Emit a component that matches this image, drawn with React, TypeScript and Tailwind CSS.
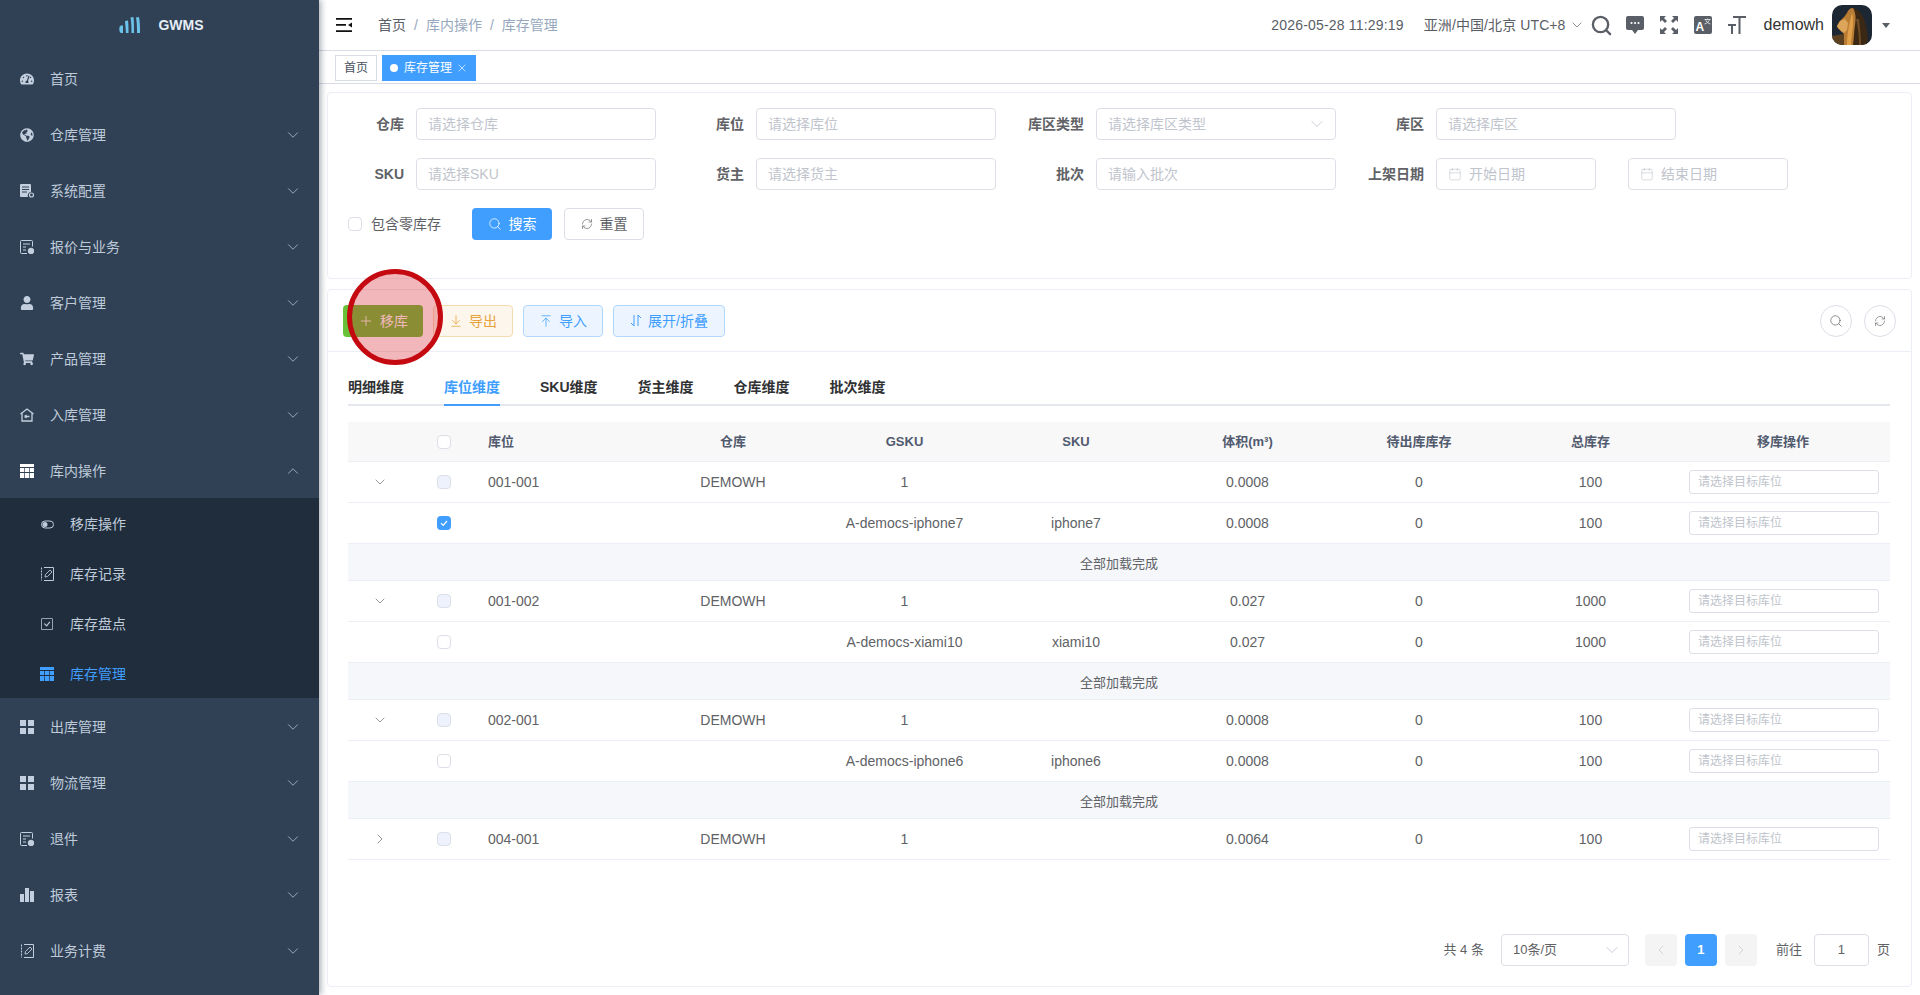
import React from "react";
import { ChevronDown, ChevronUp, ChevronRight, ChevronLeft, Plus, ArrowDownToLine, ArrowUpToLine, Search, RefreshCw, Calendar, X } from "lucide-react";
import { BsCheckSquare } from "react-icons/bs";
import { FaTachometerAlt, FaGlobeAmericas, FaUser, FaShoppingCart } from "react-icons/fa";

function DocIcon() {
  return (
    <svg width="14" height="14" viewBox="0 0 14 14" fill="none" stroke="currentColor" strokeWidth="1">
      <path d="M12.500 6.500V1.500a1 1 0 0 0-1-1h-10a1 1 0 0 0-1 1v11a1 1 0 0 0 1 1H7" />
      <path d="M3 4h7M3 7h3M3 10h3" />
      <circle cx="11" cy="11" r="2.800" fill="currentColor" />
    </svg>
  );
}

function ServerIcon() {
  return (
    <svg width="14" height="14" viewBox="0 0 14 14" fill="currentColor">
      <path d="M0 1a1 1 0 0 1 1-1h9a1 1 0 0 1 1 1v7a3.500 3.500 0 0 0-3 5H1a1 1 0 0 1-1-1z" />
      <path d="M2 3h7M2 5.500h7M2 8h5" stroke="#304156" strokeWidth="1" />
      <circle cx="11.500" cy="11" r="2" fill="none" stroke="currentColor" strokeWidth="1.200" />
    </svg>
  );
}

function HomeInIcon() {
  return (
    <svg width="14" height="14" viewBox="0 0 14 14" fill="none" stroke="currentColor" strokeWidth="1.300">
      <path d="M0.500 6L7 1l6.500 5M2 5v8h10V5" />
      <path d="M4.500 8.500h5M4.500 8.500l2-1.600M4.500 8.500l2 1.600" />
    </svg>
  );
}

function Table3Icon({ color }: { color?: string }) {
  return (
    <svg width="14" height="14" viewBox="0 0 14 14" fill={color || "currentColor"}>
      <path d="M0 0h14v3H0z" />
      <path d="M0 4h4.200v4H0zM4.900 4h4.200v4H4.900zM9.800 4H14v4H9.800zM0 9h4.200v5H0zM4.900 9h4.200v5H4.900zM9.800 9H14v5H9.800z" />
    </svg>
  );
}

function BlocksIcon() {
  return (
    <svg width="14" height="14" viewBox="0 0 14 14" fill="currentColor">
      <path d="M0 0h6v6H0zM8 0h6v6H8zM0 8h6v6H0zM8 8h6v6H8z" />
    </svg>
  );
}

function BarsIcon() {
  return (
    <svg width="14" height="14" viewBox="0 0 14 14" fill="currentColor">
      <path d="M0 6h4v8H0zM5 0h4v14H5zM10 3h4v11h-4z" />
    </svg>
  );
}

function EditIcon() {
  return (
    <svg width="13" height="14" viewBox="0 0 13 14" fill="none" stroke="currentColor" strokeWidth="1">
      <path d="M0.500 0.500v13" strokeDasharray="2 1" />
      <path d="M3 0.500H12.500V13.500H3" />
      <path d="M4 10l.5-2.500L9 3l2 2-4.500 4.500z" strokeWidth="0.900" />
    </svg>
  );
}

function ToggleIcon() {
  return (
    <svg width="13" height="9" viewBox="0 0 13 9" fill="none" stroke="currentColor" strokeWidth="1">
      <rect x="0.500" y="1" width="12" height="7" rx="3.500" />
      <circle cx="4" cy="4.500" r="2.500" fill="currentColor" stroke="none" />
    </svg>
  );
}

const menus: { label: string; icon: React.ReactNode }[] = [
  { label: "仓库管理", icon: <FaGlobeAmericas size={14} /> },
  { label: "系统配置", icon: <ServerIcon /> },
  { label: "报价与业务", icon: <DocIcon /> },
  { label: "客户管理", icon: <FaUser size={14} /> },
  { label: "产品管理", icon: <FaShoppingCart size={14} /> },
  { label: "入库管理", icon: <HomeInIcon /> },
];

const menusAfter: { label: string; icon: React.ReactNode }[] = [
  { label: "出库管理", icon: <BlocksIcon /> },
  { label: "物流管理", icon: <BlocksIcon /> },
  { label: "退件", icon: <DocIcon /> },
  { label: "报表", icon: <BarsIcon /> },
  { label: "业务计费", icon: <EditIcon /> },
];

function MenuItem(props: { label: string; icon: React.ReactNode; open?: boolean; arrow?: boolean }) {
  return (
    <div className="flex h-14 items-center pl-5 pr-[17px] pt-[2px] text-sm text-[#bfcbd9]">
      <span className="flex w-[14px] justify-center text-[#c3cfde]">{props.icon}</span>
      <span className="ml-4 flex-1">{props.label}</span>
      {props.arrow !== false && (props.open ? <ChevronUp size={18} strokeWidth={1} /> : <ChevronDown size={18} strokeWidth={1} />)}
    </div>
  );
}

function SubItem(props: { label: string; icon: React.ReactNode; active?: boolean }) {
  return (
    <div className={`flex h-[50px] items-center pl-10 pt-[2px] text-sm ${props.active ? "text-[#409eff]" : "text-[#bfcbd9]"}`}>
      <span className="flex w-[14px] justify-center">{props.icon}</span>
      <span className="ml-[16px]">{props.label}</span>
    </div>
  );
}

function Sidebar() {
  return (
    <aside className="z-10 flex w-[319px] shrink-0 flex-col bg-[#304156] shadow-[2px_0_6px_rgba(0,21,41,0.35)]">
      <div className="flex h-[50px] items-center justify-center pl-1">
        <svg width="22" height="16" viewBox="0 0 22 16" fill="#6cc3ea">
          <path d="M.5 10c1-1.500 3-2.500 3.500-1v7H2C.5 16 0 12 .5 10z" />
          <path d="M6 4l3-.5c.5 4 .5 8 .5 12.500H7C6.500 12 6.500 8 6 4z" />
          <path d="M11.500 .5l3-.5c.5 5 .5 11 .5 16h-2.500c0-5 0-10-1-15.500z" />
          <path d="M17 .5l3-.5c1 5 1 11 1 16h-3c0-5 0-10-1-15.500z" />
        </svg>
        <span className="ml-[17px] text-sm font-semibold text-[#e6edf5]">GWMS</span>
      </div>
      <MenuItem label="首页" icon={<FaTachometerAlt size={14} />} arrow={false} />
      {menus.map((m) => (
        <MenuItem key={m.label} {...m} />
      ))}
      <MenuItem label="库内操作" icon={<Table3Icon color="#fff" />} open />
      <div className="bg-[#1f2d3d]">
        <SubItem label="移库操作" icon={<ToggleIcon />} />
        <SubItem label="库存记录" icon={<EditIcon />} />
        <SubItem label="库存盘点" icon={<BsCheckSquare size={12} />} />
        <SubItem label="库存管理" icon={<Table3Icon color="#409eff" />} active />
      </div>
      {menusAfter.map((m) => (
        <MenuItem key={m.label} {...m} />
      ))}
    </aside>
  );
}

function Avatar() {
  return (
    <svg width="40" height="40" viewBox="0 0 40 40" className="ml-[8px] rounded-[10px]">
      <rect width="40" height="40" fill="#1c2733" />
      <path d="M0 31l12-2v11H0z" fill="#5b4122" />
      <path d="M21 3c6 1 10 7 12 14s3 15 3 23H12V29l-3-3-3-3-1-2 3-5 4-4 3-5z" fill="#3a2815" />
      <path d="M21 3c-3 0-5 2-6 5l-3 4-4 4-3 5 1 2 3 3 3 3v11h9c1-7 1-14 2-20s1-12-2-17z" fill="#b97c34" />
      <path d="M5 21l3-5 5-2 3 4-1 7-3 3-3-2-3-3z" fill="#dca55a" />
      <path d="M20 8c2 6 1 14 0 21s-1 8-1 11h-4c0-8 1-13 2-19s2-9 3-13z" fill="#e0a04a" />
      <path d="M27 14c1 8 2 17 2 26h-2c0-9-1-18-3-26z" fill="#6e4a22" />
    </svg>
  );
}

function Header() {
  return (
    <header className="flex h-[51px] items-center border-b border-[#d8dce5] pl-[17px] pr-[30px] text-sm text-[#5a5e66]">
      <svg width="16" height="14" viewBox="0 0 16 14" fill="#111">
        <path d="M0 0h16v1.800H0zM0 12.200h16v1.800H0zM0 6h10v1.800H0z" />
        <path d="M16 4.500v5L12 7z" />
      </svg>
      <div className="ml-[26px] flex items-center text-[#5a5e66]">
        <span>首页</span>
        <span className="mx-[8px] text-[#97a8be]">/</span>
        <span className="text-[#97a8be]">库内操作</span>
        <span className="mx-[8px] text-[#97a8be]">/</span>
        <span className="text-[#97a8be]">库存管理</span>
      </div>
      <div className="flex-1" />
      <span className="tracking-[0.18px]">2026-05-28 11:29:19</span>
      <span className="ml-[20px] tracking-[0.1px]">亚洲/中国/北京 UTC+8</span>
      <ChevronDown size={16} strokeWidth={1} className="ml-[3px]" />
      <Search size={23} strokeWidth={2.400} className="ml-[5px] text-[#5a5e66]" />
      <svg width="18" height="19" viewBox="0 0 18 19" fill="#5a5e66" className="ml-[13px]">
        <path d="M2 0h14a2 2 0 0 1 2 2v10a2 2 0 0 1-2 2h-4l-3 4-3-4H2a2 2 0 0 1-2-2V2a2 2 0 0 1 2-2z" />
        <circle cx="5.500" cy="7" r="1.100" fill="#fff" />
        <circle cx="9" cy="7" r="1.100" fill="#fff" />
        <circle cx="12.500" cy="7" r="1.100" fill="#fff" />
      </svg>
      <svg width="18" height="18" viewBox="0 0 18 18" fill="#5a5e66" className="ml-4">
        <path d="M0 0h6L4 2l3 3-2 2-3-3-2 2zM18 0v6l-2-2-3 3-2-2 3-3-2-2zM0 18v-6l2 2 3-3 2 2-3 3 2 2zM18 18h-6l2-2-3-3 2-2 3 3 2-2z" />
      </svg>
      <svg width="18" height="18" viewBox="0 0 18 18" className="ml-4">
        <rect width="18" height="18" rx="2" fill="#5a5e66" />
        <text x="1.500" y="15" fontSize="12" fontWeight="700" fill="#fff" fontFamily="Liberation Sans">A</text>
        <path d="M10.500 3.500h6M13.500 2.500v1M11.500 3.500c.5 2 2.500 4 5 4.500M15.500 3.500c-.5 2-2.500 4-5 4.500" stroke="#fff" strokeWidth="0.700" fill="none" />
      </svg>
      <svg width="18" height="18" viewBox="0 0 18 18" fill="#5a5e66" className="ml-4">
        <path d="M5 0h13v2h-5.500v16h-2V2H5z" />
        <path d="M0 8h8v2H5v8H3v-8H0z" />
      </svg>
      <span className="ml-[18px] text-base text-[#333]">demowh</span>
      <Avatar />
      <svg width="8" height="5" viewBox="0 0 8 5" fill="#5a5e66" className="ml-[10px]">
        <path d="M0 0h8L4 5z" />
      </svg>
    </header>
  );
}

function Tags() {
  return (
    <div className="flex h-[33px] gap-[5px] border-b border-[#d8dce5] pl-4 pt-1 text-xs">
      <span className="flex h-[26px] w-[42px] items-center justify-center border border-[#d8dce5] text-[#495060]">首页</span>
      <span className="flex h-[26px] w-[94px] items-center justify-center bg-[#409eff] text-white">
        <span className="mr-[6px] h-2 w-2 rounded-full bg-white" />
        库存管理
        <X size={12} strokeWidth={1.300} className="ml-[4px]" />
      </span>
    </div>
  );
}

function Field(props: { label: string; placeholder: string; select?: boolean }) {
  return (
    <div className="flex w-[340px] shrink-0 items-center">
      <label className="w-[76px] shrink-0 text-right text-sm font-semibold text-[#606266]">{props.label}</label>
      <div className="ml-3 flex h-8 w-[240px] items-center justify-between rounded border border-[#dcdfe6] bg-white pl-3 pr-[8px] text-sm text-[#c0c4cc]">
        <span className="-ml-[1px]">{props.placeholder}</span>
        {props.select && <ChevronDown size={20} strokeWidth={1} className="text-[#c0c4cc]" />}
      </div>
    </div>
  );
}

function DateInput({ text }: { text: string }) {
  return (
    <div className="flex h-8 w-[160px] shrink-0 items-center rounded border border-[#dcdfe6] pl-[11px] text-sm text-[#c0c4cc]">
      <Calendar size={14} strokeWidth={1} />
      <span className="ml-[7px]">{text}</span>
    </div>
  );
}

function SearchCard() {
  return (
    <section className="h-[187px] rounded border border-[#ebeef5] bg-white pt-[15px]">
      <div className="flex">
        <Field label="仓库" placeholder="请选择仓库" />
        <Field label="库位" placeholder="请选择库位" />
        <Field label="库区类型" placeholder="请选择库区类型" select />
        <Field label="库区" placeholder="请选择库区" />
      </div>
      <div className="mt-[18px] flex">
        <Field label="SKU" placeholder="请选择SKU" />
        <Field label="货主" placeholder="请选择货主" />
        <Field label="批次" placeholder="请输入批次" />
        <div className="flex items-center">
          <label className="w-[76px] shrink-0 whitespace-nowrap text-right text-sm font-semibold text-[#606266]">上架日期</label>
          <div className="ml-3"><DateInput text="开始日期" /></div>
          <div className="ml-8"><DateInput text="结束日期" /></div>
        </div>
      </div>
      <div className="mt-[18px] flex items-center pl-[20px]">
        <span className="h-[14px] w-[14px] rounded-sm border border-[#dcdfe6] bg-white" />
        <span className="ml-[9px] text-sm text-[#606266]">包含零库存</span>
        <button className="ml-[31px] flex h-8 w-20 items-center justify-center rounded bg-[#409eff] text-sm text-white">
          <Search size={14} strokeWidth={1.300} className="mr-[7px]" />搜索
        </button>
        <button className="ml-3 flex h-8 w-20 items-center justify-center rounded border border-[#dcdfe6] bg-white text-sm text-[#606266]">
          <RefreshCw size={12} strokeWidth={1.300} className="mr-[7px]" />重置
        </button>
      </div>
    </section>
  );
}

function Toolbar() {
  return (
    <div className="relative flex h-[62px] items-center border-b border-[#ebeef5] pl-[15px] pr-[15px] text-sm">
      <button className="flex h-8 w-20 items-center justify-center rounded bg-[#67c23a] text-white">
        <Plus size={16} strokeWidth={1.300} className="mr-[6px]" />移库
      </button>
      <button className="ml-[10px] flex h-8 w-20 items-center justify-center rounded border border-[#f5dab1] bg-[#fdf6ec] text-[#e6a23c]">
        <ArrowDownToLine size={14} strokeWidth={1.300} className="mr-[6px]" />导出
      </button>
      <button className="ml-[10px] flex h-8 w-20 items-center justify-center rounded border border-[#b3d8ff] bg-[#ecf5ff] text-[#409eff]">
        <ArrowUpToLine size={14} strokeWidth={1.300} className="mr-[6px]" />导入
      </button>
      <button className="ml-[10px] flex h-8 w-[112px] items-center justify-center rounded border border-[#b3d8ff] bg-[#ecf5ff] text-[#409eff]">
        <svg width="12" height="13" viewBox="0 0 12 13" fill="none" stroke="currentColor" strokeWidth="1" className="mr-[6px]">
          <path d="M4 1v11L1 9M8 12V1l3 3" />
        </svg>
        展开/折叠
      </button>
      <div className="flex-1" />
      <span className="flex h-8 w-8 items-center justify-center rounded-full border border-[#dcdfe6] text-[#606266]">
        <Search size={14} strokeWidth={1.200} />
      </span>
      <span className="ml-3 flex h-8 w-8 items-center justify-center rounded-full border border-[#dcdfe6] text-[#606266]">
        <RefreshCw size={12} strokeWidth={1.200} />
      </span>
      {/* click marker from the recording */}
      <div className="absolute left-[19px] top-[-21px] h-[96px] w-[96px] rounded-full border-[5px] border-[#c40a10] bg-[rgba(216,30,40,0.32)]" />
    </div>
  );
}

const tabs = ["明细维度", "库位维度", "SKU维度", "货主维度", "仓库维度", "批次维度"];
const cols = "grid grid-cols-[64px_64px_171px_172px_171px_172px_171px_172px_171px_1fr] items-center";

function Check(props: { checked?: boolean; disabled?: boolean }) {
  if (props.checked) {
    return (
      <span className="flex h-[14px] w-[14px] items-center justify-center rounded-sm bg-[#409eff]">
        <svg width="10" height="10" viewBox="0 0 10 10" fill="none" stroke="#fff" strokeWidth="1.200">
          <path d="M2 5.200l2.200 2.200L8 3" />
        </svg>
      </span>
    );
  }
  return <span className={`h-[14px] w-[14px] rounded-sm border border-[#dcdfe6] ${props.disabled ? "bg-[#edf2fc]" : "bg-white"}`} />;
}

function TargetInput() {
  return (
    <div className="ml-[13px] flex h-6 w-[190px] items-center rounded-[3px] border border-[#dcdfe6] pl-2 text-xs text-[#c0c4cc]">请选择目标库位</div>
  );
}

function Row(props: { expand?: "down" | "right"; loc?: string; wh?: string; gsku: string; sku?: string; vol: string; total: string; checked?: boolean; sub?: boolean }) {
  return (
    <div className={`${cols} h-[41px] border-b border-[#ebeef5] text-sm text-[#606266]`}>
      <span className="flex justify-center text-[#606266]">
        {props.expand === "down" && <ChevronDown size={16} strokeWidth={1} />}
        {props.expand === "right" && <ChevronRight size={16} strokeWidth={1} />}
      </span>
      <span className="flex justify-center"><Check checked={props.checked} disabled={!props.sub} /></span>
      <span className="pl-3">{props.loc}</span>
      <span className="text-center">{props.wh}</span>
      <span className="text-center">{props.gsku}</span>
      <span className="text-center">{props.sku}</span>
      <span className="text-center">{props.vol}</span>
      <span className="text-center">0</span>
      <span className="text-center">{props.total}</span>
      <TargetInput />
    </div>
  );
}

function Done() {
  return <div className="flex h-[37px] items-center justify-center border-b border-[#ebeef5] bg-[#f5f7fa] pt-1 text-[13px] text-[#606266]">全部加载完成</div>;
}

function StockTable() {
  return (
    <div className="mt-4">
      <div className={`${cols} h-10 border-b border-[#ebeef5] bg-[#f8f8f9] text-[13px] font-semibold text-[#515a6e]`}>
        <span />
        <span className="flex justify-center"><Check /></span>
        <span className="pl-3">库位</span>
        <span className="text-center">仓库</span>
        <span className="text-center">GSKU</span>
        <span className="text-center">SKU</span>
        <span className="text-center">体积(m³)</span>
        <span className="text-center">待出库库存</span>
        <span className="text-center">总库存</span>
        <span className="text-center">移库操作</span>
      </div>
      <Row expand="down" loc="001-001" wh="DEMOWH" gsku="1" vol="0.0008" total="100" />
      <Row gsku="A-democs-iphone7" sku="iphone7" vol="0.0008" total="100" checked sub />
      <Done />
      <Row expand="down" loc="001-002" wh="DEMOWH" gsku="1" vol="0.027" total="1000" />
      <Row gsku="A-democs-xiami10" sku="xiami10" vol="0.027" total="1000" sub />
      <Done />
      <Row expand="down" loc="002-001" wh="DEMOWH" gsku="1" vol="0.0008" total="100" />
      <Row gsku="A-democs-iphone6" sku="iphone6" vol="0.0008" total="100" sub />
      <Done />
      <Row expand="right" loc="004-001" wh="DEMOWH" gsku="1" vol="0.0064" total="100" />
    </div>
  );
}

function Pager() {
  return (
    <div className="mt-[74px] flex h-8 items-center justify-end text-[13px] text-[#606266]">
      <span>共 4 条</span>
      <div className="ml-[17px] flex h-8 w-[128px] items-center justify-between rounded border border-[#dcdfe6] pl-[11px] pr-[6px]">
        <span>10条/页</span>
        <ChevronDown size={20} strokeWidth={1} className="text-[#c0c4cc]" />
      </div>
      <span className="ml-4 flex h-8 w-8 items-center justify-center rounded-sm bg-[#f4f4f5] text-[#c0c4cc]"><ChevronLeft size={16} strokeWidth={1} /></span>
      <span className="ml-2 flex h-8 w-8 items-center justify-center rounded-sm bg-[#409eff] font-bold text-white">1</span>
      <span className="ml-2 flex h-8 w-8 items-center justify-center rounded-sm bg-[#f4f4f5] text-[#c0c4cc]"><ChevronRight size={16} strokeWidth={1} /></span>
      <span className="ml-[19px]">前往</span>
      <span className="ml-[12px] flex h-8 w-[55px] items-center justify-center rounded border border-[#dcdfe6]">1</span>
      <span className="ml-2">页</span>
    </div>
  );
}

function StockCard() {
  return (
    <section className="mt-[10px] h-[698px] rounded border border-[#ebeef5] bg-white">
      <Toolbar />
      <div className="pl-5 pr-[21px] pt-4">
        <div className="flex h-[38px] border-b-2 border-[#e4e7ed] text-sm font-semibold text-[#303133]">
          {tabs.map((t, i) => (
            <span key={t} className={`-mb-[2px] mr-10 flex h-[38px] items-center border-b-2 pt-[2px] ${i === 1 ? "border-[#409eff] text-[#409eff]" : "border-transparent"}`}>{t}</span>
          ))}
        </div>
        <StockTable />
        <Pager />
      </div>
    </section>
  );
}

export default function App() {
  return (
    <div className="flex h-[995px] w-[1920px] overflow-hidden bg-white font-['Liberation_Sans','Noto_Sans_CJK_SC',sans-serif]">
      <Sidebar />
      <main className="flex min-w-0 flex-1 flex-col">
        <Header />
        <Tags />
        <div className="px-2 pt-2">
          <SearchCard />
          <StockCard />
        </div>
      </main>
    </div>
  );
}
